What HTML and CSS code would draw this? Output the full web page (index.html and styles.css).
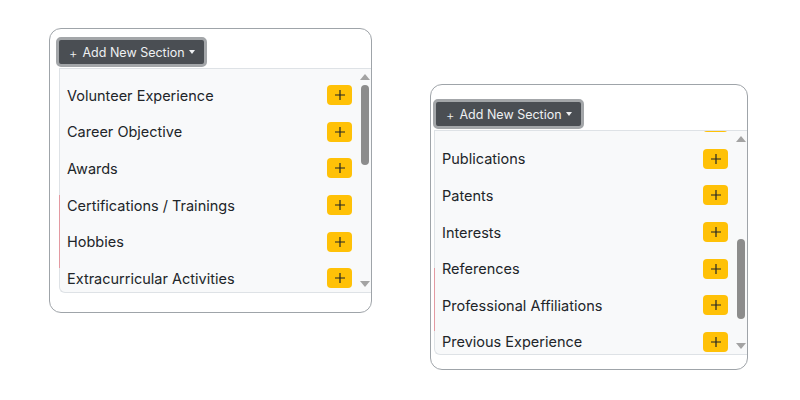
FILE: index.html
```html
<!DOCTYPE html>
<html lang="en">
<head>
  <meta charset="UTF-8" />
  <meta name="viewport" content="width=device-width, initial-scale=1" />
  <title>Add New Section</title>
  <link rel="stylesheet" href="styles.css">
</head>
<body>
  <div class="stage">

    <!-- Card 1: menu at the top -->
    <div class="card card-first">
      <button class="toggle"><span class="toggle-plus">+</span>Add New Section</button>
      <div class="menu">
        <div class="menu-view">
          <div class="menu-list">
            <div class="menu-row"><span>Volunteer Experience</span><button class="add-btn"><svg viewBox="0 0 10 10"><path d="M5 0v10M0 5h10"/></svg></button></div>
            <div class="menu-row"><span>Career Objective</span><button class="add-btn"><svg viewBox="0 0 10 10"><path d="M5 0v10M0 5h10"/></svg></button></div>
            <div class="menu-row"><span>Awards</span><button class="add-btn"><svg viewBox="0 0 10 10"><path d="M5 0v10M0 5h10"/></svg></button></div>
            <div class="menu-row"><span>Certifications / Trainings</span><button class="add-btn"><svg viewBox="0 0 10 10"><path d="M5 0v10M0 5h10"/></svg></button></div>
            <div class="menu-row"><span>Hobbies</span><button class="add-btn"><svg viewBox="0 0 10 10"><path d="M5 0v10M0 5h10"/></svg></button></div>
            <div class="menu-row"><span>Extracurricular Activities</span><button class="add-btn"><svg viewBox="0 0 10 10"><path d="M5 0v10M0 5h10"/></svg></button></div>
            <div class="menu-row"><span>Publications</span><button class="add-btn"><svg viewBox="0 0 10 10"><path d="M5 0v10M0 5h10"/></svg></button></div>
          </div>
        </div>
        <div class="scrollbar">
          <span class="arrow-up"></span>
          <div class="track"><div class="thumb thumb-top"></div></div>
          <span class="arrow-down"></span>
        </div>
      </div>
      <div class="mark mark-first"></div>
    </div>

    <!-- Card 2: same menu scrolled down -->
    <div class="card card-second">
      <button class="toggle"><span class="toggle-plus">+</span>Add New Section</button>
      <div class="menu">
        <div class="menu-view">
          <div class="menu-list menu-list-scrolled">
            <div class="menu-row"><span>Volunteer Experience</span><button class="add-btn"><svg viewBox="0 0 10 10"><path d="M5 0v10M0 5h10"/></svg></button></div>
            <div class="menu-row"><span>Career Objective</span><button class="add-btn"><svg viewBox="0 0 10 10"><path d="M5 0v10M0 5h10"/></svg></button></div>
            <div class="menu-row"><span>Awards</span><button class="add-btn"><svg viewBox="0 0 10 10"><path d="M5 0v10M0 5h10"/></svg></button></div>
            <div class="menu-row"><span>Certifications / Trainings</span><button class="add-btn"><svg viewBox="0 0 10 10"><path d="M5 0v10M0 5h10"/></svg></button></div>
            <div class="menu-row"><span>Hobbies</span><button class="add-btn"><svg viewBox="0 0 10 10"><path d="M5 0v10M0 5h10"/></svg></button></div>
            <div class="menu-row"><span>Extracurricular Activities</span><button class="add-btn"><svg viewBox="0 0 10 10"><path d="M5 0v10M0 5h10"/></svg></button></div>
            <div class="menu-row"><span>Publications</span><button class="add-btn"><svg viewBox="0 0 10 10"><path d="M5 0v10M0 5h10"/></svg></button></div>
            <div class="menu-row"><span>Patents</span><button class="add-btn"><svg viewBox="0 0 10 10"><path d="M5 0v10M0 5h10"/></svg></button></div>
            <div class="menu-row"><span>Interests</span><button class="add-btn"><svg viewBox="0 0 10 10"><path d="M5 0v10M0 5h10"/></svg></button></div>
            <div class="menu-row"><span>References</span><button class="add-btn"><svg viewBox="0 0 10 10"><path d="M5 0v10M0 5h10"/></svg></button></div>
            <div class="menu-row"><span>Professional Affiliations</span><button class="add-btn"><svg viewBox="0 0 10 10"><path d="M5 0v10M0 5h10"/></svg></button></div>
            <div class="menu-row"><span>Previous Experience</span><button class="add-btn"><svg viewBox="0 0 10 10"><path d="M5 0v10M0 5h10"/></svg></button></div>
          </div>
        </div>
        <div class="scrollbar">
          <span class="arrow-up"></span>
          <div class="track"><div class="thumb thumb-bottom"></div></div>
          <span class="arrow-down"></span>
        </div>
      </div>
      <div class="mark mark-second"></div>
    </div>

  </div>
</body>
</html>
```

FILE: styles.css
```css
/* Nền trắng, font Inter */
body {
  margin: 0;
  background-color: #fff;
  color: #212529;
  font-family: Inter, "Noto Sans", sans-serif;
}
.stage {
  display: flex;
  align-items: flex-start;
  gap: 58px;
  padding: 28px 0 0 49px;
}
/* Khung card */
.card {
  position: relative;
  display: flex;
  flex-direction: column;
  align-items: flex-start;
  border: 1px solid #9fa4a9;
  border-radius: 12px;
  overflow: hidden;
}
.card-first {
  width: 321px;
  padding: 8px 0 19px 0;
}
.card-second {
  width: 316px;
  margin-top: 56px;
  padding: 14px 0 14px 0;
}
/* Nút dropdown */
.toggle {
  display: flex;
  align-items: center;
  height: 30px;
  padding: 0 9px 0 10px;
  background-color: #4a4e53;
  color: #eef0f2;
  font-family: inherit;
  font-size: 12.5px;
  border: 3px solid #a3a6a9;
  border-radius: 5px;
  cursor: pointer;
}
.card-first .toggle {
  margin-left: 6px;
}
.card-second .toggle {
  margin-left: 2px;
}
.toggle-plus {
  font-size: 13px;
  font-weight: 300;
  margin-right: 5px;
  margin-top: 2px;
}
.toggle::after {
  content: "";
  margin-left: 4px;
  border-top: 4px solid #eef0f2;
  border-left: 3.5px solid transparent;
  border-right: 3.5px solid transparent;
}
/* Danh sách */
.menu {
  align-self: stretch;
  display: flex;
  height: 225px;
  box-sizing: border-box;
  margin-top: 1px;
  background-color: #f8f9fa;
  border: 1px solid #dee2e6;
  border-right: none;
  border-radius: 0 0 0 6px;
}
.card-first .menu {
  margin-left: 9px;
}
.card-second .menu {
  margin-left: 3px;
}
.menu-view {
  flex: 1;
  overflow: hidden;
  padding-top: 8px;
}
.menu-list-scrolled {
  margin-top: -218px;
}
.menu-row {
  display: flex;
  align-items: center;
  justify-content: space-between;
  height: 36.6px;
  padding: 0 7px;
  font-size: 14.5px;
}
.add-btn {
  display: flex;
  align-items: center;
  justify-content: center;
  width: 25px;
  height: 20px;
  padding: 0;
  background-color: #ffc107;
  border: none;
  border-radius: 4px;
  cursor: pointer;
}
.add-btn svg {
  width: 10px;
  height: 10px;
  stroke: #212529;
  stroke-width: 1.2;
  fill: none;
}
/* Thanh cuộn vẽ tay */
.scrollbar {
  width: 12px;
  display: flex;
  flex-direction: column;
  align-items: center;
  padding: 5px 0;
}
.arrow-up,
.arrow-down {
  width: 0;
  height: 0;
  border-left: 5px solid transparent;
  border-right: 5px solid transparent;
}
.arrow-up {
  border-bottom: 6px solid #a3a3a3;
}
.arrow-down {
  border-top: 6px solid #a3a3a3;
}
.track {
  flex: 1;
  width: 8px;
  padding: 5px 0;
}
.thumb {
  width: 8px;
  height: 80px;
  background-color: #8c8c8c;
  border-radius: 4px;
}
.thumb-bottom {
  margin-top: 92px;
}
/* Vạch đỏ bên trái */
.mark {
  position: absolute;
  width: 1px;
  background-color: #e39aa2;
}
.mark-first {
  left: 9px;
  top: 166px;
  height: 73px;
}
.mark-second {
  left: 3px;
  top: 183px;
  height: 63px;
}
```
